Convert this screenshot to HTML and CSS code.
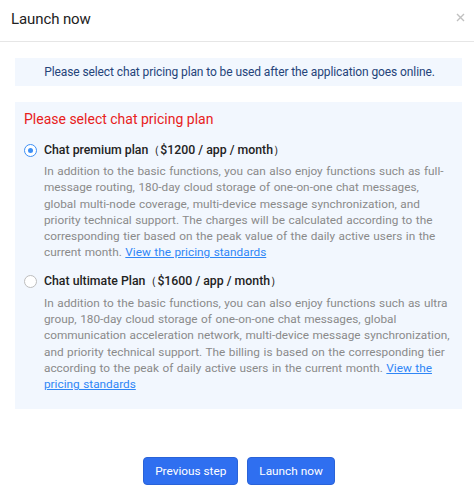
FILE: index.html
```html
<!DOCTYPE html>
<html>
<head>
<meta charset="utf-8">
<link rel="stylesheet" href="styles.css">
</head>
<body>
<div class="dialog">
  <div class="header">
    <span class="title">Launch now</span>
    <span class="close" aria-label="close">
      <svg width="9" height="9" viewBox="0 0 9 9"><path d="M1 1L8 8M8 1L1 8" stroke="#c0c0c0" stroke-width="1.4" fill="none"/></svg>
    </span>
  </div>
  <div class="content">
    <div class="notice"><span>Please select chat pricing plan to be used after the application goes online.</span></div>
    <div class="panel">
      <div class="panel-title"><span>Please select chat pricing plan</span></div>
      <div class="plan">
        <div class="plan-head"><span class="radio checked"></span><span class="plan-name">Chat premium plan（$1200 / app / month）</span></div>
        <div class="plan-desc">In addition to the basic functions, you can also enjoy functions such as full-message routing, 180-day cloud storage of one-on-one chat messages, global multi-node coverage, multi-device message synchronization, and priority technical support. The charges will be calculated according to the corresponding tier based on the peak value of the daily active users in the current month. <a href="#">View the pricing standards</a></div>
      </div>
      <div class="plan plan-second">
        <div class="plan-head"><span class="radio"></span><span class="plan-name">Chat ultimate Plan（$1600 / app / month）</span></div>
        <div class="plan-desc">In addition to the basic functions, you can also enjoy functions such as ultra group, 180-day cloud storage of one-on-one chat messages, global communication acceleration network, multi-device message synchronization, and priority technical support. The billing is based on the corresponding tier according to the peak of daily active users in the current month. <a href="#">View the pricing standards</a></div>
      </div>
    </div>
  </div>
  <div class="footer">
    <button class="btn">Previous step</button>
    <button class="btn">Launch now</button>
  </div>
</div>
</body>
</html>
```
FILE: styles.css
```css
html, body {
  margin: 0;
  padding: 0;
  background: #fff;
}
body {
  font-family: Roboto, "Liberation Sans", Arial, sans-serif;
  width: 474px;
}
.dialog {
  width: 474px;
}
.header {
  height: 42px;
  border-bottom: 1px solid #e6e6e6;
  display: flex;
  align-items: center;
  justify-content: space-between;
  padding: 0 9px 0 11px;
  box-sizing: border-box;
}
.title {
  font-size: 15px;
  letter-spacing: -0.1px;
  color: #222;
  position: relative;
  top: -2px;
}
.close {
  display: flex;
  width: 9px;
  height: 9px;
  position: relative;
  top: -3px;
}
.content {
  padding: 16px 12px 0 15px;
}
.notice {
  height: 28px;
  background: #f2f7fe;
  color: #25447a;
  font-size: 12px;
  letter-spacing: -0.1px;
  display: flex;
  align-items: center;
  justify-content: center;
  padding-left: 2px;
}
.panel {
  margin-top: 16px;
  background: #f2f7fe;
  padding: 7px 10px 16px 9px;
}
.panel-title {
  color: #e8211c;
  font-size: 14px;
  line-height: 20px;
}
.plan {
  margin-top: 11px;
}
.plan-second {
  margin-top: 11px;
}
.plan-head {
  display: flex;
  align-items: center;
  height: 20px;
}
.radio {
  width: 11px;
  height: 11px;
  border: 1px solid #bdbdbd;
  border-radius: 50%;
  background: #fff;
  box-sizing: content-box;
  margin-right: 7px;
  position: relative;
  flex: none;
}
.radio.checked {
  border-color: #3d8ff5;
}
.radio.checked::after {
  content: "";
  position: absolute;
  left: 3px;
  top: 3px;
  width: 5px;
  height: 5px;
  border-radius: 50%;
  background: #3d8ff5;
}
.plan-name {
  font-size: 12.3px;
  font-weight: 500;
  color: #222;
}
.plan-desc {
  margin-top: 3px;
  padding-left: 20px;
  font-size: 11.8px;
  line-height: 16.3px;
  word-spacing: 0.6px;
  color: #8a8a8a;
}
.plan-desc a {
  color: #2f86f6;
  text-decoration: underline;
}
.footer {
  margin-top: 48px;
  display: flex;
  justify-content: center;
  gap: 9px;
  padding-left: 4px;
}
.btn {
  height: 28px;
  background: #2f6ff0;
  border: 1px solid #2a63d8;
  border-radius: 4px;
  color: #fff;
  font-family: Roboto, "Liberation Sans", Arial, sans-serif;
  font-size: 11.8px;
  padding: 0 11px;
}
```
